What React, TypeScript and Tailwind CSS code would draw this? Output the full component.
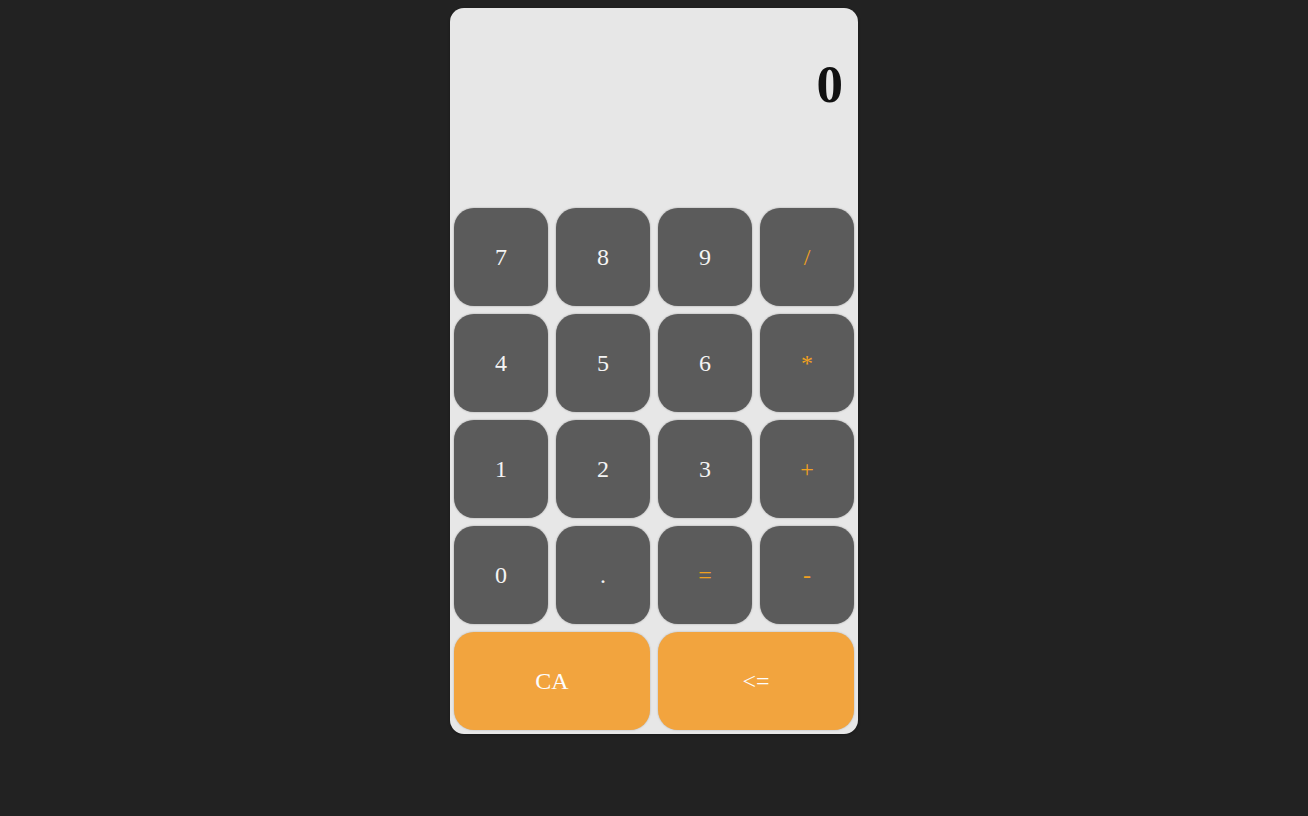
import React from "react";

type Key = { label: string; kind: "num" | "op" | "act"; wide?: boolean };

const keys: Key[] = [
  { label: "7", kind: "num" },
  { label: "8", kind: "num" },
  { label: "9", kind: "num" },
  { label: "/", kind: "op" },
  { label: "4", kind: "num" },
  { label: "5", kind: "num" },
  { label: "6", kind: "num" },
  { label: "*", kind: "op" },
  { label: "1", kind: "num" },
  { label: "2", kind: "num" },
  { label: "3", kind: "num" },
  { label: "+", kind: "op" },
  { label: "0", kind: "num" },
  { label: ".", kind: "num" },
  { label: "=", kind: "op" },
  { label: "-", kind: "op" },
  { label: "CA", kind: "act", wide: true },
  { label: "<=", kind: "act", wide: true },
];

export default function App() {
  return (
    <div
      className="min-h-[816px] w-full bg-[#222222] flex justify-center pt-[8px]"
      style={{ fontFamily: '"Liberation Serif", "Times New Roman", serif' }}
    >
      <div className="w-[408px] h-[726px] bg-[#e7e7e7] rounded-[14px] flex flex-col shadow-[0_1px_3px_rgba(0,0,0,0.3)]">
        <div className="h-[196px] flex justify-end items-start pt-[37px] pr-[15px]">
          <span className="text-[53px] font-bold text-[#111111]">0</span>
        </div>
        <div className="grid grid-cols-[repeat(4,94px)] auto-rows-[98px] gap-[8px] p-[4px]">
          {keys.map((k) => (
            <button
              key={k.label}
              className={
                k.kind === "act"
                  ? "col-span-2 rounded-[20px] bg-[#f2a43e] text-[#fdfdfd] text-[24px] flex items-center justify-center shadow-[0_0_2px_rgba(0,0,0,0.25)]"
                  : k.kind === "op"
                  ? "rounded-[20px] bg-[#5b5b5b] text-[#f0a020] text-[24px] flex items-center justify-center shadow-[0_0_2px_rgba(0,0,0,0.35)]"
                  : "rounded-[20px] bg-[#5b5b5b] text-[#f4f4f4] text-[24px] flex items-center justify-center shadow-[0_0_2px_rgba(0,0,0,0.35)]"
              }
            >
              {k.label}
            </button>
          ))}
        </div>
      </div>
    </div>
  );
}
